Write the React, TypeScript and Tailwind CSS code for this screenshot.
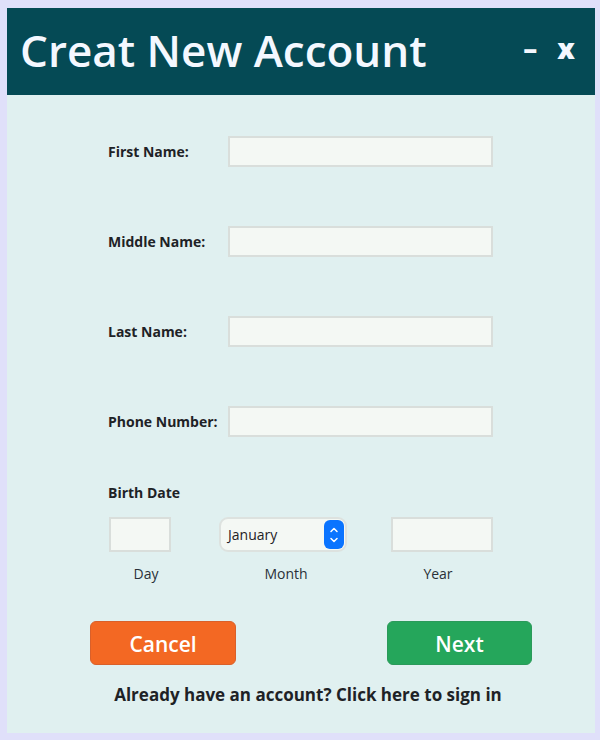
import { ChevronUp, ChevronDown } from "lucide-react"

const fields = ["First Name:", "Middle Name:", "Last Name:", "Phone Number:"]

const font = { fontFamily: '"Open Sans", "DejaVu Sans", sans-serif' }

export default function App() {
  return (
    <div className="w-[600px] h-[740px] bg-[#e0e0fa] pt-[8px] pb-[7px] pl-[7px] pr-[5px]" style={font}>
      <div className="h-full flex flex-col bg-[#e0f0f0]">
        {/* title bar */}
        <div className="h-[87px] shrink-0 bg-[#054a55] flex items-center justify-between pl-[13px] pr-[20px] text-[#f4f8ff]">
          <h1 className="text-[44px] leading-none font-semibold pb-[4px]">Creat New Account</h1>
          <div className="flex items-center gap-[20px] font-extrabold text-[28px] leading-none pb-[8px]">
            <span>–</span>
            <span>x</span>
          </div>
        </div>

        <div className="pt-[41px] pl-[101px] pr-[102px]">
          {fields.map((label, i) => (
            <div key={label} className={`flex items-center h-[31px] ${i < fields.length - 1 ? "mb-[59px]" : ""}`}>
              <label className="w-[120px] shrink-0 text-[14px] font-bold text-[#1e2226]">{label}</label>
              <input className="w-[265px] h-[31px] border-2 border-[#d9dedb] bg-[#f4f8f4] outline-none" />
            </div>
          ))}

          <div className="mt-[45px] h-[20px] flex items-center text-[14px] font-bold text-[#1e2226]">Birth Date</div>

          <div className="mt-[15px] flex">
            <div className="flex flex-col ml-[1px]">
              <input className="w-[62px] h-[35px] border-2 border-[#d9dedb] bg-[#f4f8f4] outline-none" />
              <div className="mt-[11px] h-[20px] pl-[12px] text-center text-[14px] text-[#2a3038]">Day</div>
            </div>
            <div className="flex flex-col ml-[48px]">
              <div className="w-[128px] h-[35px] rounded-[9px] border-2 border-[#dde2df] bg-[#f4f8f4] flex items-center justify-between pl-[7px] pr-[1px]">
                <span className="text-[14px] text-[#1e2226]">January</span>
                <span className="w-[20px] h-[29px] rounded-[6px] bg-[#0a74ff] flex flex-col items-center justify-center text-white">
                  <ChevronUp size={12} strokeWidth={3} className="-mb-[1px]" />
                  <ChevronDown size={12} strokeWidth={3} className="-mt-[1px]" />
                </span>
              </div>
              <div className="mt-[11px] h-[20px] pl-[6px] text-center text-[14px] text-[#2a3038]">Month</div>
            </div>
            <div className="flex flex-col ml-[44px]">
              <input className="w-[102px] h-[35px] border-2 border-[#d9dedb] bg-[#f4f8f4] outline-none" />
              <div className="mt-[11px] h-[20px] pr-[8px] text-center text-[14px] text-[#2a3038]">Year</div>
            </div>
          </div>
        </div>

        <div className="mt-[38px] flex justify-between pl-[83px] pr-[63px]">
          <button className="w-[146px] h-[44px] pt-[3px] rounded-[6px] bg-[#f36823] border border-[#d9602a] text-white text-[21px] font-semibold">Cancel</button>
          <button className="w-[145px] h-[44px] pt-[3px] rounded-[6px] bg-[#25a65b] border border-[#2b9a5a] text-white text-[21px] font-semibold">Next</button>
        </div>

        <p className="mt-[20px] h-[20px] flex items-center justify-center text-[17px] font-bold text-[#1e2226] pl-[14px]">
          Already have an account? Click here to sign in
        </p>
      </div>
    </div>
  )
}
